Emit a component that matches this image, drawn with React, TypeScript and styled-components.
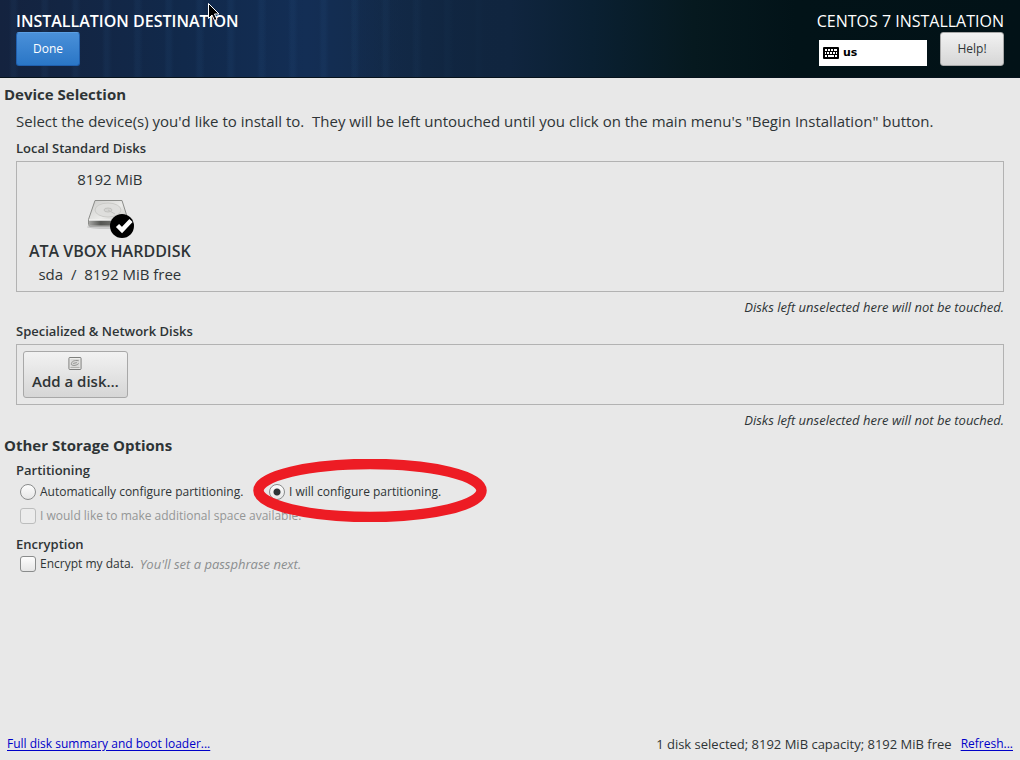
import React from "react";
import styled, { createGlobalStyle, css } from "styled-components";

const GlobalStyle = createGlobalStyle`
  *, *::before, *::after { box-sizing: border-box; }
  body {
    margin: 0;
    background: #e8e8e8;
    color: #2e3436;
    font-family: "Open Sans", "Noto Sans", sans-serif;
    font-size: 12px;
    line-height: 20px;
  }
  button, input { font: inherit; color: inherit; margin: 0; }
`;

const Page = styled.div`
  display: flex;
  flex-direction: column;
  min-height: 100vh;
`;

const Header = styled.header`
  position: relative;
  display: flex;
  justify-content: space-between;
  padding: 11px 16px;
  color: #fff;
  border-bottom: 1px solid #06121c;
  background:
    linear-gradient(90deg, rgba(16, 37, 63, 0) 34%, #10253f 50%, #0a2032 58%, #06191f 68%, #021318 78%, #021217 100%),
    repeating-linear-gradient(90deg, rgba(60, 120, 180, 0) 0 9px, rgba(60, 120, 180, 0.07) 12px 15px, rgba(60, 120, 180, 0) 19px 31px),
    linear-gradient(90deg, #14233f 0%, #11294b 18%, #132e55 30%, #132b4b 38%, #10253f 50%);
`;

const HeaderSide = styled.div<{ $end?: boolean }>`
  display: flex;
  flex-direction: column;
  gap: 1px;
  align-items: ${(p) => (p.$end ? "flex-end" : "flex-start")};
`;

const Title = styled.h1<{ $strong?: boolean }>`
  margin: 0;
  font-size: 16px;
  line-height: 20px;
  font-weight: ${(p) => (p.$strong ? 600 : 400)};
`;

const HeaderTools = styled.div`
  display: flex;
  align-items: flex-end;
  gap: 13px;
`;

const Button = styled.button<{ $primary?: boolean }>`
  min-width: 64px;
  height: 34px;
  padding: 0 16px;
  border: 1px solid #a8a8a8;
  border-radius: 3px;
  background: linear-gradient(#f2f2f2, #d6d6d6);
  color: #2e3436;
  ${(p) =>
    p.$primary &&
    css`
      border-color: #1f5fae;
      border-top-color: #5a9fe4;
      background: linear-gradient(#4a90d9, #2a76c6);
      color: #fff;
    `}
`;

const LayoutButton = styled.button`
  display: flex;
  align-items: center;
  gap: 4px;
  width: 108px;
  height: 26px;
  padding: 0 4px;
  border: 0;
  background: #fff;
  color: #000;
  font-family: "DejaVu Sans", sans-serif;
  font-size: 11px;
  font-weight: 700;
`;

const Pointer = styled.svg`
  position: absolute;
  left: 207px;
  top: 2px;
`;

const Main = styled.main`
  flex: 1;
  padding: 5px 16px 0;
`;

const Heading = styled.h2`
  margin: 0 -12px;
  font-size: 15px;
  line-height: 22px;
  font-weight: 700;
`;

const Intro = styled.p`
  margin: 4px 0 5px;
  font-size: 15px;
  line-height: 24px;
  white-space: pre-wrap;
`;

const Label = styled.h3`
  margin: 0;
  font-size: 13px;
  line-height: 20px;
  font-weight: 600;
`;

const DiskBox = styled.div`
  display: flex;
  margin-top: 3px;
  padding: 6px;
  border: 1px solid #b2b2b2;
`;

const Note = styled.p`
  margin: 5px 0 4px;
  font-size: 13px;
  text-align: right;
  font-style: italic;
`;

const Disk = styled.div`
  display: flex;
  flex-direction: column;
  align-items: center;
  padding: 0 6px;
  font-size: 15px;
  line-height: 22px;
  white-space: pre;
`;

const DiskIcon = styled.svg`
  display: block;
  margin-top: 7px;
`;

const DiskName = styled.strong`
  font-size: 16px;
  font-weight: 600;
  line-height: 24px;
`;

const AddDisk = styled(Button)`
  display: flex;
  flex-direction: column;
  align-items: center;
  height: 47px;
  padding: 5px 8px;
  font-size: 15px;
  line-height: 22px;
  font-weight: 600;
`;

const Partitioning = styled.section`
  padding-top: 4px;
`;

const Encryption = styled.section`
  padding-top: 6px;
`;

const OptionRow = styled.div<{ $short?: boolean }>`
  position: relative;
  display: flex;
  align-items: center;
  height: ${(p) => (p.$short ? "20px" : "24px")};
  padding-left: 4px;
`;

const Option = styled.label<{ $off?: boolean; $wide?: boolean }>`
  display: flex;
  align-items: center;
  gap: 4px;
  min-width: ${(p) => (p.$wide ? "249px" : "0")};
  color: ${(p) => (p.$off ? "#949696" : "inherit")};
`;

const Tick = styled.input`
  appearance: none;
  width: 16px;
  height: 16px;
  border: 1px solid #8a8c8c;
  border-radius: ${(p) => (p.type === "radio" ? "50%" : "3px")};
  background: linear-gradient(#fdfdfd, #e6e6e6);
  &:checked {
    background: radial-gradient(circle, #2e3436 0 3px, transparent 4px), linear-gradient(#fdfdfd, #e6e6e6);
  }
  &:disabled {
    border-color: #bcbdbd;
    background: #ececec;
  }
`;

const Hint = styled.em`
  margin-left: 6px;
  font-size: 13px;
  color: #8b8e8f;
`;

const Highlight = styled.svg`
  position: absolute;
  left: 237px;
  top: -21px;
  z-index: 1;
  pointer-events: none;
`;

const Footer = styled.footer`
  display: flex;
  justify-content: space-between;
  padding: 6px 7px;
`;

const Summary = styled.div`
  display: flex;
  gap: 9px;
`;

const Totals = styled.span`
  font-size: 13px;
`;

const Link = styled.a`
  color: #0000c8;
  text-decoration: underline;
  text-underline-offset: 2px;
`;

function KeyboardIcon() {
  return (
    <svg width="16" height="12" viewBox="0 0 16 12" aria-hidden="true">
      <rect width="16" height="12" rx="1" fill="#000" />
      <path
        d="M2 3h2M5 3h2M8 3h2M11 3h3M2 6h1M4 6h2M7 6h2M10 6h2M13 6h1M2 9h2M5 9h6M12 9h2"
        stroke="#fff"
        strokeWidth="2"
      />
    </svg>
  );
}

function HardDisk() {
  return (
    <DiskIcon width="48" height="42" viewBox="0 0 48 42" role="img" aria-label="Selected disk">
      <defs>
        <linearGradient id="lid" x1="0" y1="0" x2="1" y2="1">
          <stop offset="0" stopColor="#cbcbc9" />
          <stop offset="0.5" stopColor="#ebebe9" />
          <stop offset="1" stopColor="#b8b8b5" />
        </linearGradient>
        <linearGradient id="front" x1="0" y1="0" x2="1" y2="0">
          <stop offset="0" stopColor="#a4a4a2" />
          <stop offset="0.3" stopColor="#555653" />
          <stop offset="1" stopColor="#8a8a88" />
        </linearGradient>
      </defs>
      <ellipse cx="22" cy="30" rx="21" ry="2" fill="#c8c8c8" />
      <path d="M9 3.500h27l6 19v5q0 1.500-1.500 1.500H4q-1.500 0-1.500-1.500v-5z" fill="url(#lid)" stroke="#8b8c89" />
      <path d="M3 23.500h39v4q0 1-1 1H4q-1 0-1-1z" fill="url(#front)" />
      <path d="M3 23h38" stroke="#f6f6f5" />
      <ellipse cx="22" cy="13" rx="13" ry="7" fill="#dededc" stroke="#cbcbc8" />
      <ellipse cx="22" cy="13" rx="4" ry="2" fill="#d4d4d2" stroke="#c2c2bf" />
      <path d="M22 13l7 4" stroke="#c2c2bf" />
      <circle cx="36" cy="29" r="12" fill="#000" />
      <path d="M31.500 28.500l4.500 4.500 9-9.500" fill="none" stroke="#fff" strokeWidth="4.500" />
    </DiskIcon>
  );
}

function SmallDisk() {
  return (
    <svg width="14" height="14" viewBox="0 0 14 14" aria-hidden="true">
      <rect x="0.500" y="0.500" width="13" height="13" rx="1" fill="#f1f1f0" stroke="#6f706e" />
      <rect x="2" y="2" width="10" height="9" fill="#d9d9d7" />
      <path d="M3 8c0-3 3-5 8-4M3 8c2 2 6 1 8-1M5 7l4-1" fill="none" stroke="#8f908e" />
      <path d="M2 11.500h10" stroke="#a0a09e" />
    </svg>
  );
}

export default function App() {
  return (
    <Page>
      <GlobalStyle />
      <Header>
        <HeaderSide>
          <Title $strong>INSTALLATION DESTINATION</Title>
          <Button $primary>Done</Button>
        </HeaderSide>
        <HeaderSide $end>
          <Title as="div">CENTOS 7 INSTALLATION</Title>
          <HeaderTools>
            <LayoutButton aria-label="Keyboard layout: us">
              <KeyboardIcon />
              us
            </LayoutButton>
            <Button>Help!</Button>
          </HeaderTools>
        </HeaderSide>
        <Pointer width="14" height="20" viewBox="0 0 14 20" aria-hidden="true">
          <path d="M1.500 1.500v15l3.500-3.500 2.500 5.500 2.500-1-2.500-5.500h4.500z" fill="#000" stroke="#fff" />
        </Pointer>
      </Header>
      <Main>
        <Heading>Device Selection</Heading>
        <Intro>
          {
            "Select the device(s) you'd like to install to.  They will be left untouched until you click on the main menu's \"Begin Installation\" button."
          }
        </Intro>
        <Label>Local Standard Disks</Label>
        <DiskBox>
          <Disk>
            <span>8192 MiB</span>
            <HardDisk />
            <DiskName>ATA VBOX HARDDISK</DiskName>
            <span>{"sda  /  8192 MiB free"}</span>
          </Disk>
        </DiskBox>
        <Note>Disks left unselected here will not be touched.</Note>
        <Label>Specialized &amp; Network Disks</Label>
        <DiskBox>
          <AddDisk>
            <SmallDisk />
            Add a disk…
          </AddDisk>
        </DiskBox>
        <Note>Disks left unselected here will not be touched.</Note>
        <Heading>Other Storage Options</Heading>
        <Partitioning>
          <Label>Partitioning</Label>
          <OptionRow>
            <Option $wide>
              <Tick type="radio" name="partitioning" />
              Automatically configure partitioning.
            </Option>
            <Option>
              <Tick type="radio" name="partitioning" defaultChecked />
              I will configure partitioning.
            </Option>
            <Highlight width="234" height="63" viewBox="0 0 234 63" aria-hidden="true">
              <ellipse cx="117" cy="31.500" rx="111.500" ry="26.500" fill="none" stroke="#ed1c24" strokeWidth="10.500" />
            </Highlight>
          </OptionRow>
          <OptionRow>
            <Option $off>
              <Tick type="checkbox" disabled />
              I would like to make additional space available.
            </Option>
          </OptionRow>
        </Partitioning>
        <Encryption>
          <Label>Encryption</Label>
          <OptionRow $short>
            <Option>
              <Tick type="checkbox" />
              Encrypt my data.
            </Option>
            <Hint>You'll set a passphrase next.</Hint>
          </OptionRow>
        </Encryption>
      </Main>
      <Footer>
        <Link href="#summary">Full disk summary and boot loader...</Link>
        <Summary>
          <Totals>1 disk selected; 8192 MiB capacity; 8192 MiB free</Totals>
          <Link href="#refresh">Refresh...</Link>
        </Summary>
      </Footer>
    </Page>
  );
}
